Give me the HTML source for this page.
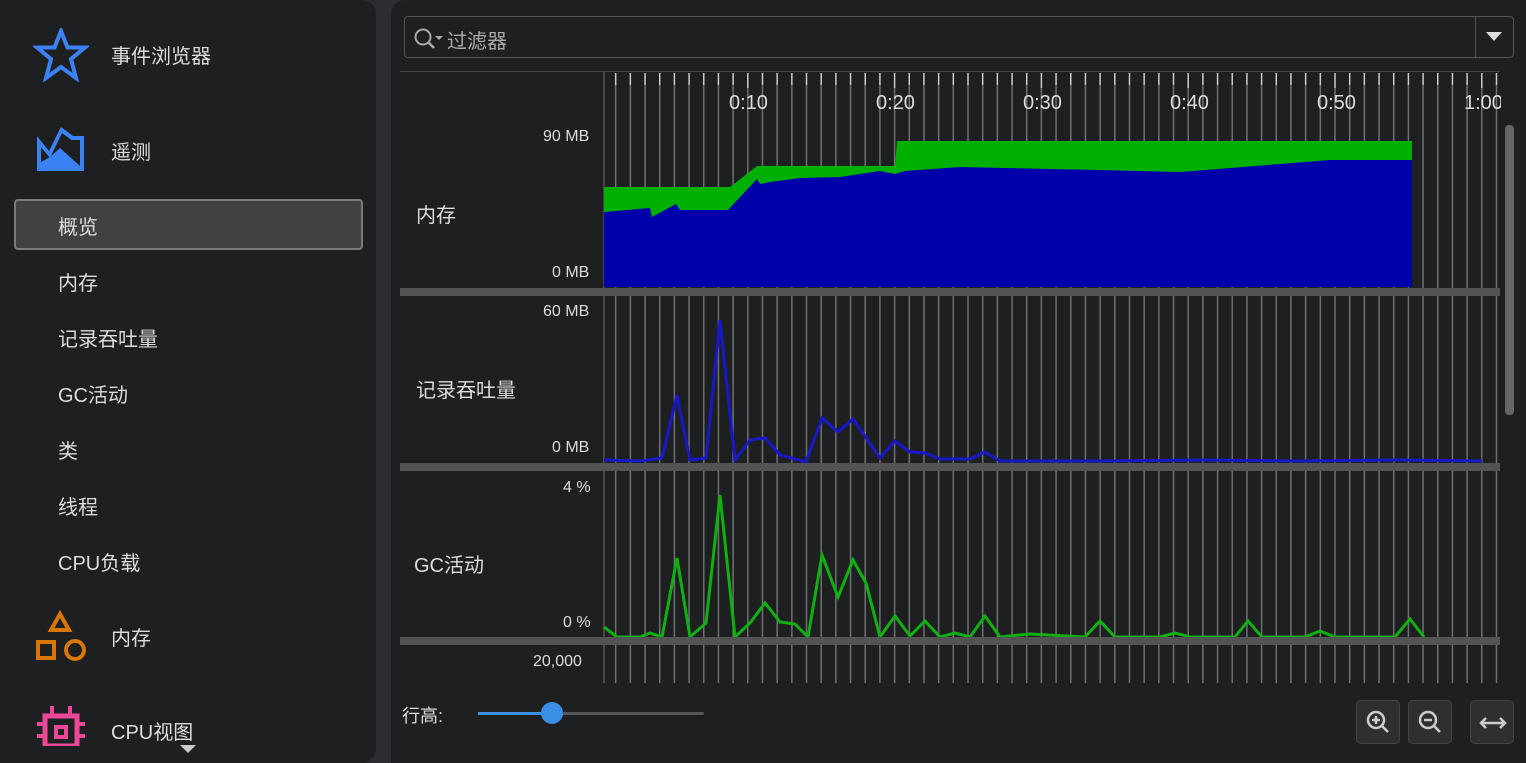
<!DOCTYPE html>
<html><head><meta charset="utf-8"><style>
body{margin:0;width:1526px;height:763px;background:#2b2d30;font-family:"Liberation Sans","Noto Sans CJK SC",sans-serif;color:#dcdcdc;overflow:hidden;position:relative}
.p{position:absolute;background:#1e1f21}
.t{position:absolute;white-space:nowrap}
.btn{position:absolute;width:44px;height:44px;border:1px solid #444;border-radius:5px;background:#2e2f31;box-sizing:border-box}
</style></head><body>
<div class="p" style="left:0;top:0;width:376px;height:763px;border-radius:0 14px 14px 0"></div>
<div class="p" style="left:391px;top:0;width:1135px;height:763px;border-radius:14px 0 0 0"></div>

<svg style="position:absolute;left:33px;top:28px" width="56" height="54"><polygon points="28,3 34.5,19.5 52,19.5 38,31 43,50 28,39 13,50 18,31 4,19.5 21.5,19.5" fill="none" stroke="#3b82f6" stroke-width="4"/></svg>
<div class="t" style="left:111px;top:40px;font-size:20px">事件浏览器</div>
<svg style="position:absolute;left:36px;top:126px" width="50" height="46"><path d="M1,45 V10 L13,25 L25,1 L37,10 H48 V45 Z M5,41 H44 V14 H35.5 L26,7 L14,32 L5,21Z" fill="#3b82f6" fill-rule="evenodd"/><path d="M5,41 L5,36 L14,31 L24,22 L44,40 V41Z" fill="#3b82f6"/></svg>
<div class="t" style="left:111px;top:136px;font-size:20px">遥测</div>
<div style="position:absolute;left:14px;top:199px;width:349px;height:51px;box-sizing:border-box;border:2px solid #7b7b7b;border-radius:4px;background:#414143"></div>
<div class="t" style="left:58px;top:211px;font-size:20px">概览</div>
<div class="t" style="left:58px;top:267px;font-size:20px">内存</div>
<div class="t" style="left:58px;top:323px;font-size:20px">记录吞吐量</div>
<div class="t" style="left:58px;top:379px;font-size:20px">GC活动</div>
<div class="t" style="left:58px;top:435px;font-size:20px">类</div>
<div class="t" style="left:58px;top:491px;font-size:20px">线程</div>
<div class="t" style="left:58px;top:547px;font-size:20px">CPU负载</div>
<svg style="position:absolute;left:36px;top:610px" width="54" height="54"><polygon points="24,4 33,20 15,20" fill="none" stroke="#d97706" stroke-width="4"/><rect x="2" y="32" width="16" height="16" fill="none" stroke="#d97706" stroke-width="4"/><circle cx="39" cy="40" r="9" fill="none" stroke="#d97706" stroke-width="4"/></svg>
<div class="t" style="left:111px;top:622px;font-size:20px">内存</div>
<svg style="position:absolute;left:36px;top:706px" width="50" height="40"><path d="M1,18 H9 M41,18 H49 M1,30 H9 M41,30 H49 M16,0 V10 M34,0 V10" stroke="#ec4899" stroke-width="4"/><rect x="9" y="10" width="32" height="30" fill="none" stroke="#ec4899" stroke-width="5"/><rect x="20" y="21" width="10" height="10" fill="none" stroke="#ec4899" stroke-width="4"/></svg>
<div class="t" style="left:111px;top:716px;font-size:20px">CPU视图</div>
<svg style="position:absolute;left:180px;top:745px" width="16" height="10"><polygon points="0,0 16,0 8,8" fill="#ccc"/></svg>

<div style="position:absolute;left:404px;top:16px;width:1110px;height:42px;box-sizing:border-box;border:1.5px solid #555;border-radius:4px"></div>
<div style="position:absolute;left:1475px;top:17px;width:1px;height:40px;background:#555"></div>
<svg style="position:absolute;left:1486px;top:32px" width="16" height="10"><polygon points="0,0 16,0 8,9" fill="#ddd"/></svg>
<svg style="position:absolute;left:413px;top:27px" width="32" height="24"><circle cx="10" cy="10" r="7.5" fill="none" stroke="#aaa" stroke-width="2"/><path d="M15,15 L21,21" stroke="#aaa" stroke-width="2.5"/><polygon points="22,9 30,9 26,13" fill="#aaa"/></svg>
<div class="t" style="left:447px;top:25px;font-size:20px;color:#aaa">过滤器</div>
<div style="position:absolute;left:400px;top:71px;width:1100px;height:1px;background:#444"></div>

<svg style="position:absolute;left:0;top:0" width="1526" height="763" id="c">
<g id="grid" stroke="#707070" stroke-width="1.5"></g>
<line x1="604" y1="72" x2="604" y2="683" stroke="#555" stroke-width="1.5"/>
<polygon points="604,187 730,187 757,166 895,166 897,141 1412,141 1412,287 604,287" fill="#00b000"/>
<polygon points="604,212 650,208 652,217 676,204 680,210 728,210 757,179 760,184 770,182 800,178 840,177 880,171 895,174 905,171 960,167 1100,170 1180,172 1330,160 1412,160 1412,287 604,287" fill="#0000aa"/>
<polyline fill="none" stroke="#1818c8" stroke-width="3" points="604,460 640,461 662,458 677,395 690,460 706,458 720,320 735,460 750,440 765,438 780,455 806,462 822,418 838,432 853,419 880,458 895,441 910,452 925,453 940,459 970,459 985,452 1000,461 1100,461 1200,460 1300,461 1400,460 1482,461"/>
<polyline fill="none" stroke="#10b010" stroke-width="3" points="604,627 617,637 640,637 650,633 662,637 677,558 690,637 706,623 720,495 735,637 750,623 765,603 780,622 795,624 808,637 822,555 838,597 853,560 866,583 880,637 895,616 910,636 925,621 940,637 955,633 970,637 985,616 1000,637 1030,634 1085,637 1100,621 1115,637 1160,637 1175,633 1190,637 1235,637 1248,621 1262,637 1305,637 1320,631 1335,637 1395,637 1410,619 1424,637"/>
<rect x="400" y="288" width="1100" height="8" fill="#535353"/>
<rect x="400" y="463" width="1100" height="8" fill="#535353"/>
<rect x="400" y="637" width="1100" height="8" fill="#535353"/>
<rect x="1505" y="125" width="9" height="290" rx="4" fill="#666"/>
</svg>
<script>
var g=document.getElementById('grid'),s='';
for(var k=1;k<=61;k++){var x=601+k*14.68;if(x>1500)break;var maj=(k%10==0);
s+='<line x1="'+x+'" y1="73" x2="'+x+'" y2="'+(maj?88:85)+'" stroke="#ccc"/>';
s+='<line x1="'+x+'" y1="'+(maj?88:85)+'" x2="'+x+'" y2="683"/>';}
g.innerHTML=s;
</script>
<div class="t" style="left:729px;top:92px;font-size:20px">0:10</div>
<div class="t" style="left:876px;top:92px;font-size:20px">0:20</div>
<div class="t" style="left:1023px;top:92px;font-size:20px">0:30</div>
<div class="t" style="left:1170px;top:92px;font-size:20px">0:40</div>
<div class="t" style="left:1317px;top:92px;font-size:20px">0:50</div>
<div class="t" style="left:1464px;top:92px;font-size:20px;width:37px;overflow:hidden">1:00</div>

<div class="t" style="left:543px;top:128px;font-size:16px">90 MB</div>
<div class="t" style="left:552px;top:264px;font-size:16px">0 MB</div>
<div class="t" style="left:416px;top:199px;font-size:20px">内存</div>
<div class="t" style="left:543px;top:303px;font-size:16px">60 MB</div>
<div class="t" style="left:552px;top:439px;font-size:16px">0 MB</div>
<div class="t" style="left:416px;top:374px;font-size:20px">记录吞吐量</div>
<div class="t" style="left:563px;top:479px;font-size:16px">4 %</div>
<div class="t" style="left:563px;top:614px;font-size:16px">0 %</div>
<div class="t" style="left:414px;top:549px;font-size:20px">GC活动</div>
<div class="t" style="left:533px;top:653px;font-size:16px">20,000</div>

<div class="t" style="left:402px;top:702px;font-size:18px">行高:</div>
<div style="position:absolute;left:478px;top:712px;width:226px;height:3px;background:#555;border-radius:2px"></div>
<div style="position:absolute;left:478px;top:712px;width:74px;height:3px;background:#3a8ee6"></div>
<div style="position:absolute;left:541px;top:702px;width:22px;height:22px;border-radius:50%;background:#3a8ee6"></div>

<div class="btn" style="left:1356px;top:700px"><svg width="44" height="44"><circle cx="19" cy="19" r="8" fill="none" stroke="#ccc" stroke-width="2.5"/><path d="M25,25 L31,31 M15,19 H23 M19,15 V23" stroke="#ccc" stroke-width="2.5"/></svg></div>
<div class="btn" style="left:1408px;top:700px"><svg width="44" height="44"><circle cx="19" cy="19" r="8" fill="none" stroke="#ccc" stroke-width="2.5"/><path d="M25,25 L31,31 M15,19 H23" stroke="#ccc" stroke-width="2.5"/></svg></div>
<div class="btn" style="left:1470px;top:700px"><svg width="44" height="44"><path d="M10,22 H34 M15,17 L10,22 L15,27 M29,17 L34,22 L29,27" fill="none" stroke="#ccc" stroke-width="2.5"/></svg></div>
</body></html>
